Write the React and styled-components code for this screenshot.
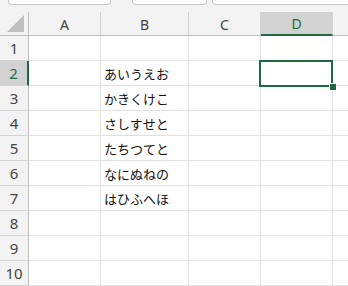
import styled, { createGlobalStyle } from "styled-components";

const GlobalStyle = createGlobalStyle`
  html, body {
    margin: 0;
    padding: 0;
    background: #ffffff;
    overflow: hidden;
  }
`;

const columns = ["A", "B", "C", "D"];
const activeCol = "D";
const activeRow = 2;
const values = {
  2: "あいうえお",
  3: "かきくけこ",
  4: "さしすせと",
  5: "たちつてと",
  6: "なにぬねの",
  7: "はひふへほ",
};
const rows = [1, 2, 3, 4, 5, 6, 7, 8, 9, 10];

function App() {
  return (
    <>
      <GlobalStyle />
      <Page>
        <TopStrip>
          <TopBox $width={101} />
          <TopBox $width={73} />
          <TopBox $grow />
        </TopStrip>
        <Sheet>
          <Corner>
            <svg width="18" height="18" viewBox="0 0 18 18">
              <polygon points="17,0 17,17 0,17" fill="#bfbfbf" />
            </svg>
          </Corner>
          {columns.map((c) => (
            <ColHead key={c} $active={c === activeCol}>
              {c}
            </ColHead>
          ))}
          <ColHead $last />
          {rows.map((r) => (
            <Row key={r} r={r} />
          ))}
          <Selection>
            <Handle />
          </Selection>
        </Sheet>
      </Page>
    </>
  );
}

function Row({ r }) {
  return (
    <>
      <RowHead $active={r === activeRow}>{r}</RowHead>
      {columns.map((c) => (
        <Cell key={c}>{c === "B" ? values[r] : null}</Cell>
      ))}
      <Cell $last />
    </>
  );
}

export default App;

const Page = styled.div`
  width: 348px;
  height: 286px;
  background: #f3f3f3;
  overflow: hidden;
`;

const TopStrip = styled.div`
  height: 12px;
  display: flex;
  gap: 5px;
  padding-left: 8px;
  box-sizing: border-box;
  & > div:nth-child(2) {
    margin-left: 16px;
  }
`;

const TopBox = styled.div`
  width: ${(p) => (p.$grow ? "auto" : `${p.$width}px`)};
  flex: ${(p) => (p.$grow ? "1" : "none")};
  height: 5px;
  margin-top: -1px;
  background: #ffffff;
  border: 1px solid #c6c6c6;
  border-top: none;
  border-radius: 0 0 4px 4px;
  margin-right: ${(p) => (p.$grow ? "-6px" : "0")};
`;

const Sheet = styled.div`
  position: relative;
  display: grid;
  grid-template-columns: 29px 72px 88px 72px 72px 1fr;
  grid-template-rows: 24px repeat(10, 25px);
  font-family: "Noto Sans", "Liberation Sans", sans-serif;
`;

const Corner = styled.div`
  background: #f3f3f3;
  border-right: 1px solid #bdbdbd;
  border-bottom: 1px solid #bdbdbd;
  box-sizing: border-box;
  display: flex;
  align-items: flex-end;
  justify-content: flex-end;
  padding: 0 3px 2px 0;
`;

const ColHead = styled.div`
  background: ${(p) => (p.$active ? "#d2d2d2" : "#f3f3f3")};
  color: ${(p) => (p.$active ? "#1e6b41" : "#444444")};
  border-right: ${(p) => (p.$last ? "none" : "1px solid #d4d4d4")};
  border-bottom: ${(p) => (p.$active ? "2px solid #1e6b41" : "1px solid #bdbdbd")};
  box-sizing: border-box;
  display: flex;
  align-items: center;
  justify-content: center;
  font-size: 14px;
  padding-top: 1px;
`;

const RowHead = styled.div`
  background: ${(p) => (p.$active ? "#d2d2d2" : "#f3f3f3")};
  color: ${(p) => (p.$active ? "#1e6b41" : "#444444")};
  border-right: ${(p) => (p.$active ? "2px solid #1e6b41" : "1px solid #bdbdbd")};
  border-bottom: 1px solid #d4d4d4;
  box-sizing: border-box;
  display: flex;
  align-items: center;
  justify-content: center;
  font-size: 15px;
`;

const Cell = styled.div`
  background: #ffffff;
  border-right: ${(p) => (p.$last ? "none" : "1px solid #e1e1e1")};
  border-bottom: 1px solid #e1e1e1;
  box-sizing: border-box;
  display: flex;
  align-items: center;
  padding: 1px 0 0 3px;
  font-family: "Noto Sans CJK JP", "Noto Sans", sans-serif;
  font-size: 13px;
  color: #111111;
  white-space: nowrap;
`;

const Selection = styled.div`
  position: absolute;
  left: 259px;
  top: 48px;
  width: 74px;
  height: 27px;
  border: 2px solid #1e6b41;
  box-sizing: border-box;
  pointer-events: none;
`;

const Handle = styled.div`
  position: absolute;
  right: -5px;
  bottom: -5px;
  width: 6px;
  height: 6px;
  background: #1e6b41;
  border: 1px solid #ffffff;
  border-right: none;
  border-bottom: none;
`;
